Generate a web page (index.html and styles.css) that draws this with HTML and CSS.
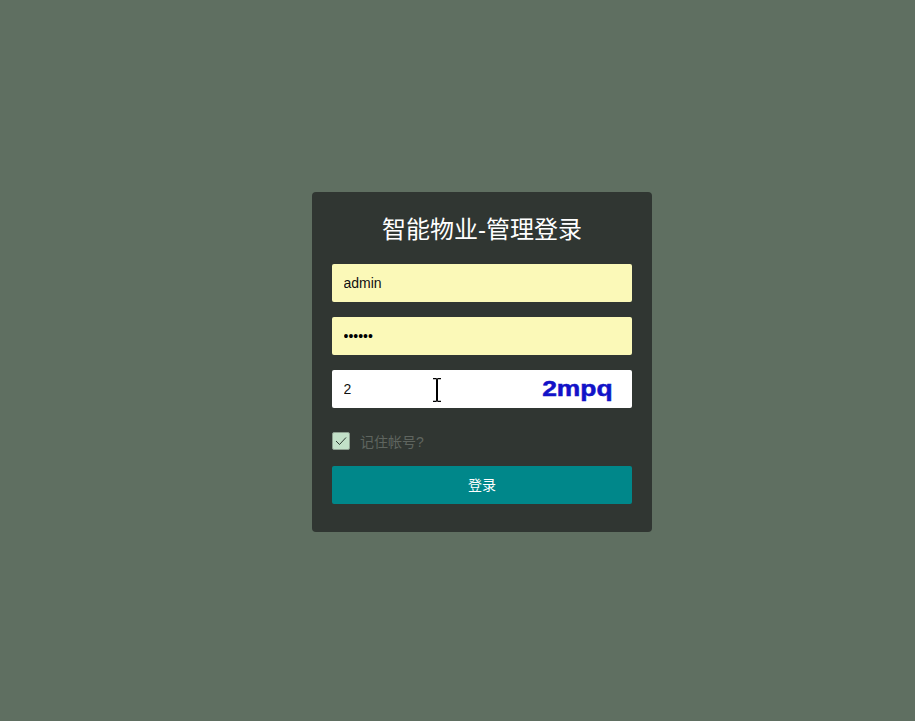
FILE: index.html
```html
<!DOCTYPE html>
<html lang="zh-CN">
<head>
<meta charset="UTF-8">
<title>智能物业-管理登录</title>
<meta name="viewport" content="width=device-width,initial-scale=1">
<link rel="stylesheet" href="styles.css">
</head>
<body>
  <form class="login-box">
    <h1 class="login-title">智能物业-管理登录</h1>

    <input class="field field-filled" type="text" value="admin">
    <input class="field field-filled field-pass" type="password" value="123456">

    <div class="captcha-row">
      <input class="field" type="text" value="2">
      <span class="captcha-img"><span class="captcha-text">2mpq</span></span>
      <!-- text cursor from the screenshot -->
      <svg class="ibeam" viewBox="0 0 8 24" aria-hidden="true">
        <path d="M0 .7 H3 L4 1.7 L5 .7 H8 M0 23.3 H3 L4 22.3 L5 23.3 H8" fill="none" stroke="#000" stroke-width="1.2"/>
        <path d="M4 1.5 V22.5" fill="none" stroke="#000" stroke-width="2"/>
      </svg>
    </div>

    <label class="remember">
      <span class="check">
        <svg viewBox="0 0 12 12" class="check-mark" aria-hidden="true">
          <path d="M1 6 L4.5 9.5 L11 2.5" fill="none" stroke="#2d3a32" stroke-width="1"/>
        </svg>
      </span>
      <span class="remember-text">记住帐号?</span>
    </label>

    <button class="login-btn" type="button">登录</button>
  </form>
</body>
</html>
```

FILE: styles.css
```css
:root{font-family:"Liberation Sans","Noto Sans CJK SC",sans-serif}
body{box-sizing:border-box;margin:0;min-height:100vh;padding:192px 0 0 312px;background:#5f6f61}

/* ---------- box ---------- */
.login-box{box-sizing:border-box;width:340px;height:340px;padding:20px;
           background:#303632;border-radius:4px;display:flex;flex-direction:column}
.login-title{margin:0 0 17px;height:35px;line-height:35px;font-size:24px;font-weight:400;
             color:#fff;text-align:center}

/* ---------- inputs ---------- */
.field{display:block;box-sizing:border-box;width:300px;height:38px;margin:0 0 15px;
       padding:0 11.5px;border:0;border-radius:2px;outline:0;background:#fff;color:#111;
       font:14px "Liberation Sans","Noto Sans CJK SC",sans-serif}
.field-filled{background:#fbf9b8}
.field-pass{font-size:14px;color:#000}

.captcha-row{position:relative}
.captcha-img{position:absolute;top:0;right:0;width:110px;height:38px;display:flex;
             align-items:center;justify-content:center}
.captcha-text{display:block;font-size:22px;font-weight:700;color:#1212c8;
              -webkit-text-stroke:.5px #1212c8;transform:scaleX(1.2)}
.ibeam{position:absolute;top:8px;left:101px;width:8px;height:24px}

/* ---------- remember me ---------- */
.remember{display:flex;align-items:center;gap:10px;height:20px;margin:8px 0 15px;
          font-size:14px;color:#5f655f}
.check{box-sizing:border-box;width:18px;height:18px;border:1px solid #8d9f90;border-radius:2px;
       background:#c2e0c8;display:flex;align-items:center;justify-content:center}
.check-mark{width:12px;height:12px}

.login-btn{display:block;width:300px;height:38px;padding:0 0 3px;border:0;border-radius:2px;
           background:#00878a;color:#fff;cursor:pointer;
           font:14px "Liberation Sans","Noto Sans CJK SC",sans-serif}
```
